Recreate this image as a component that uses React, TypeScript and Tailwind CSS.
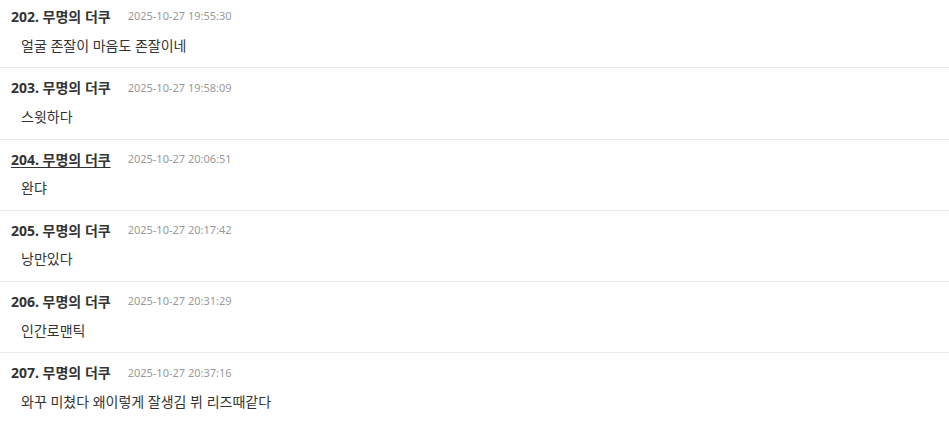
import React from 'react';

interface Comment {
  no: number;
  time: string;
  body: string;
  underline?: boolean;
}

const comments: Comment[] = [
  { no: 202, time: '2025-10-27 19:55:30', body: '얼굴 존잘이 마음도 존잘이네' },
  { no: 203, time: '2025-10-27 19:58:09', body: '스윗하다' },
  { no: 204, time: '2025-10-27 20:06:51', body: '완댜', underline: true },
  { no: 205, time: '2025-10-27 20:17:42', body: '낭만있다' },
  { no: 206, time: '2025-10-27 20:31:29', body: '인간로맨틱' },
  { no: 207, time: '2025-10-27 20:37:16', body: '와꾸 미쳤다 왜이렇게 잘생김 뷔 리즈때같다' },
];

const font = { fontFamily: '"Noto Sans", "Noto Sans CJK KR", sans-serif' };

export default function App() {
  return (
    <div className="w-[949px] h-[423px] overflow-hidden bg-white" style={font}>
      <ul className="-mt-[3px]">
        {comments.map((c) => (
          <li key={c.no} className="border-b border-[#ebebeb] pt-[9.5px] pb-[11.75px]">
            <div className="flex items-center h-5 pl-[11px]">
              <span
                className={`text-[14px] font-bold text-[#333] ${c.underline ? 'underline underline-offset-2' : ''}`}
              >
                {c.no}. 무명의 더쿠
              </span>
              <span className="ml-[17px] text-[11px] text-[#999]">{c.time}</span>
            </div>
            <p className="mt-[9px] h-5 leading-5 pl-[21px] text-[14px] text-[#333]">{c.body}</p>
          </li>
        ))}
      </ul>
    </div>
  );
}
